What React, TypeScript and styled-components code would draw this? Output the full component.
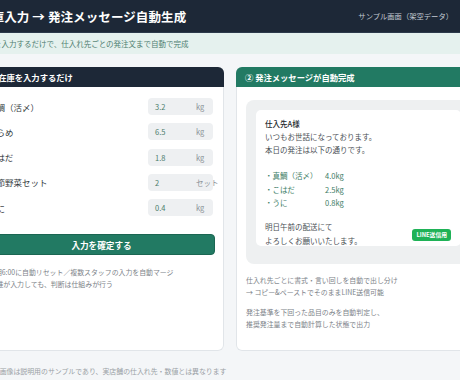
import React from "react";
import styled, { createGlobalStyle } from "styled-components";

const GlobalStyle = createGlobalStyle`
  html, body {
    margin: 0;
    padding: 0;
    overflow: hidden;
    background: #f4f6f8;
  }
  body {
    font-family: "Noto Sans CJK JP", "Noto Sans", sans-serif;
    -webkit-font-smoothing: antialiased;
  }
  * { box-sizing: border-box; }
`;

const Page = styled.div`
  width: 526px;
  margin-left: -33px;
  min-height: 380px;
  background: #f4f6f8;
`;

const TopBar = styled.header`
  height: 33px;
  display: flex;
  align-items: center;
  justify-content: space-between;
  padding: 0 40px 0 12px;
  background: #1d2837;
  border-bottom: 1px solid #2c3a4b;
`;

const Title = styled.h1`
  margin: 0;
  font-size: 12.5px;
  font-weight: 700;
  color: #ffffff;
  letter-spacing: 0.1px;
`;

const Tag = styled.span`
  font-size: 7.3px;
  color: #c3cad3;
`;

const Lead = styled.div`
  height: 21px;
  display: flex;
  align-items: center;
  padding-left: 12px;
  background: #e5f1ee;
  font-size: 7.5px;
  color: #4f7f71;
`;

const Main = styled.main`
  display: grid;
  grid-template-columns: 1fr 1fr;
  gap: 12px;
  padding: 13px 12px 0;
`;

const Card = styled.section`
  height: 284px;
  background: #ffffff;
  border-radius: 6px;
  overflow: hidden;
  box-shadow: inset 0 0 0 1px #e1e5e9;
  display: flex;
  flex-direction: column;
`;

const CardHead = styled.div<{ $bg: string }>`
  height: 20px;
  flex: none;
  display: flex;
  align-items: center;
  padding: 0 9px;
  background: ${(p) => p.$bg};
  color: #ffffff;
  font-size: 8.3px;
  font-weight: 700;
`;

const InputBody = styled.div`
  padding: 11px 9px 0;
  display: flex;
  flex-direction: column;
`;

const Rows = styled.div`
  display: grid;
  grid-auto-rows: 17px;
  row-gap: 8.3px;
`;

const Row = styled.div`
  display: flex;
  align-items: center;
  justify-content: space-between;
  padding-right: 2px;
`;

const Label = styled.span`
  font-size: 8.5px;
  color: #333a40;
`;

const Field = styled.div`
  width: 65px;
  height: 17px;
  display: flex;
  align-items: center;
  padding-left: 7px;
  background: #eef0f2;
  border-radius: 4px;
  font-size: 7.5px;
`;

const Value = styled.span`
  width: 41px;
  flex: none;
  color: #4b7c6c;
`;

const Unit = styled.span`
  white-space: nowrap;
  color: #8a9096;
`;

const Submit = styled.button`
  margin-top: 18px;
  height: 21px;
  border: 1px solid #1b6652;
  border-radius: 4px;
  background: #227a63;
  color: #ffffff;
  font-family: inherit;
  font-size: 8.6px;
  font-weight: 700;
  padding: 0;
`;

const Notes = styled.div`
  margin-top: 11px;
  font-size: 6.9px;
  line-height: 12px;
  color: #7c8288;
`;

const MsgBody = styled.div`
  padding: 13px 10px 0;
  display: flex;
  flex-direction: column;
`;

const Phone = styled.div`
  background: #eef0f1;
  border-radius: 8px;
  padding: 10px 10px 18px;
`;

const Bubble = styled.div`
  position: relative;
  height: 136px;
  background: #ffffff;
  border-radius: 5px;
  padding: 6.5px 9px 0;
  font-size: 7.5px;
  line-height: 13.3px;
  color: #4a4f55;
`;

const Para = styled.div<{ $gap?: number }>`
  margin-top: ${(p) => p.$gap ?? 0}px;
`;

const Addressee = styled.div`
  color: #23282d;
  font-weight: 500;
`;

const Items = styled.div`
  margin-top: 13px;
  display: grid;
  grid-template-columns: 60px auto;
  color: #3d7c66;
`;

const Badge = styled.span`
  position: absolute;
  right: 10px;
  bottom: 5px;
  height: 12px;
  padding: 0 4px;
  display: flex;
  align-items: center;
  border-radius: 3px;
  background: #1fb257;
  color: #ffffff;
  font-size: 5.8px;
  font-weight: 700;
`;

const Explain = styled.p<{ $gap: number }>`
  margin: ${(p) => p.$gap}px 0 0;
  font-size: 6.9px;
  line-height: 12px;
  color: #7c8288;
`;

const Footer = styled.footer`
  padding: 14px 12px 0;
  font-size: 6.9px;
  line-height: 12px;
  color: #9a9fa5;
`;

const stock = [
  { name: "真鯛（活〆）", value: "3.2", unit: "kg" },
  { name: "ひらめ", value: "6.5", unit: "kg" },
  { name: "こはだ", value: "1.8", unit: "kg" },
  { name: "季節野菜セット", value: "2", unit: "セット" },
  { name: "うに", value: "0.4", unit: "kg" },
];

const orders = [
  { name: "・真鯛（活〆）", qty: "4.0kg" },
  { name: "・こはだ", qty: "2.5kg" },
  { name: "・うに", qty: "0.8kg" },
];

export default function App() {
  return (
    <>
      <GlobalStyle />
      <Page>
        <TopBar>
          <Title>在庫入力 → 発注メッセージ自動生成</Title>
          <Tag>サンプル画面（架空データ）</Tag>
        </TopBar>
        <Lead>在庫を入力するだけで、仕入れ先ごとの発注文まで自動で完成</Lead>
        <Main>
          <Card>
            <CardHead $bg="#1d2837">① 在庫を入力するだけ</CardHead>
            <InputBody>
              <Rows>
                {stock.map((s) => (
                  <Row key={s.name}>
                    <Label>{s.name}</Label>
                    <Field>
                      <Value>{s.value}</Value>
                      <Unit>{s.unit}</Unit>
                    </Field>
                  </Row>
                ))}
              </Rows>
              <Submit type="button">入力を確定する</Submit>
              <Notes>
                <div>毎朝6:00に自動リセット／複数スタッフの入力を自動マージ</div>
                <div>→ 誰が入力しても、判断は仕組みが行う</div>
              </Notes>
            </InputBody>
          </Card>
          <Card>
            <CardHead $bg="#227a63">② 発注メッセージが自動完成</CardHead>
            <MsgBody>
              <Phone>
                <Bubble>
                  <Addressee>仕入先A様</Addressee>
                  <div>いつもお世話になっております。</div>
                  <div>本日の発注は以下の通りです。</div>
                  <Items>
                    {orders.map((o) => (
                      <React.Fragment key={o.name}>
                        <span>{o.name}</span>
                        <span>{o.qty}</span>
                      </React.Fragment>
                    ))}
                  </Items>
                  <Para $gap={11}>
                    <div>明日午前の配送にて</div>
                    <div>よろしくお願いいたします。</div>
                  </Para>
                  <Badge>LINE送信用</Badge>
                </Bubble>
              </Phone>
              <Explain $gap={10}>
                仕入れ先ごとに書式・言い回しを自動で出し分け
                <br />→ コピー&amp;ペーストでそのままLINE送信可能
              </Explain>
              <Explain $gap={7.7}>
                発注基準を下回った品目のみを自動判定し、
                <br />
                推奨発注量まで自動計算した状態で出力
              </Explain>
            </MsgBody>
          </Card>
        </Main>
        <Footer>※この画像は説明用のサンプルであり、実店舗の仕入れ先・数値とは異なります</Footer>
      </Page>
    </>
  );
}
